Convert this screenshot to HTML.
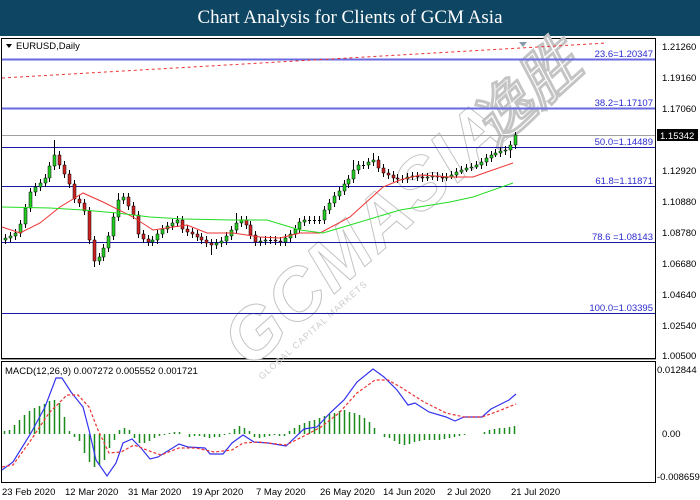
<!DOCTYPE html>
<html><head><meta charset="utf-8"><style>
html,body{margin:0;padding:0;background:#fff;width:700px;height:500px;overflow:hidden}
.hd{position:absolute;left:0;top:0;width:700px;height:36px;background:#0d4562;color:#fff;font:19px "Liberation Serif",serif;text-align:center;line-height:36px}
svg{position:absolute;left:0;top:0}
text{font-family:"Liberation Sans",sans-serif}
</style></head><body>
<div class="hd">Chart Analysis for Clients of GCM Asia</div>
<svg width="700" height="500" viewBox="0 0 700 500">
<g font-size="10" fill="#000">
<rect x="1.5" y="38.5" width="654" height="320" fill="none" stroke="#000"/>
<rect x="1.5" y="361.5" width="654" height="121" fill="none" stroke="#000"/>
<line x1="1" y1="359.5" x2="656" y2="359.5" stroke="#999"/>
<g transform="translate(250,370) rotate(-42)" fill="#fff" stroke="#c4c4c4" stroke-width="1">
<text x="0" y="0" font-size="72" font-weight="bold" font-style="italic" letter-spacing="2">GCMASIA</text>
<text x="330" y="0" font-size="60" font-weight="bold" font-style="italic">逸胜</text>
</g>
<text transform="translate(262,380) rotate(-42)" x="0" y="0" font-size="9" fill="#ccc" letter-spacing="1">GLOBAL CAPITAL MARKETS</text>
<line x1="2" y1="59.5" x2="655" y2="59.5" stroke="#6a6ae0" stroke-width="2"/>
<line x1="2" y1="108.5" x2="655" y2="108.5" stroke="#6a6ae0" stroke-width="2"/>
<line x1="2" y1="135.5" x2="655" y2="135.5" stroke="#a0a0a0"/>
<line x1="2" y1="147.5" x2="655" y2="147.5" stroke="#1a1aa8"/>
<line x1="2" y1="186.5" x2="655" y2="186.5" stroke="#1a1aa8"/>
<line x1="2" y1="242.5" x2="655" y2="242.5" stroke="#1a1aa8"/>
<line x1="2" y1="313.5" x2="655" y2="313.5" stroke="#1a1aa8"/>
<line x1="2" y1="78" x2="607" y2="43" stroke="#e33" stroke-dasharray="3,3"/>
<polygon points="519,42 527,42 523,47" fill="#8899aa"/>
<g fill="#2a2ad0" text-anchor="end" font-size="9.5">
<text x="653" y="57">23.6=1.20347</text>
<text x="653" y="106">38.2=1.17107</text>
<text x="653" y="145">50.0=1.14489</text>
<text x="653" y="184">61.8=1.11871</text>
<text x="653" y="240">78.6 =1.08143</text>
<text x="653" y="311">100.0=1.03395</text>
</g>
<polygon points="6,44 12,44 9,48" fill="#000"/>
<text x="16" y="49" font-size="9.5">EURUSD,Daily</text>
<text x="5" y="374" font-size="9.5">MACD(12,26,9) 0.007272 0.005552 0.001721</text>
<path fill="none" stroke="#000" stroke-width="1" d="M5.5 234V244M10.5 232V242M15.5 229V240M20.5 220V237M25.5 204V228M30.5 188V212M35.5 183V196M40.5 179V191M45.5 174V187M49.5 162V182M54.5 140V170M59.5 151V169M64.5 161V178M69.5 170V188M74.5 180V203M79.5 195V207M84.5 199V215M89.5 207V244M94.5 236V267M99.5 253V265M103.5 244V261M108.5 232V252M113.5 213V240M118.5 193V221M123.5 193V204M128.5 193V210M133.5 202V219M138.5 211V238M143.5 230V243M148.5 235V246M152.5 236V246M157.5 230V244M162.5 225V238M167.5 222V233M172.5 219V230M177.5 216V227M182.5 216V233M187.5 225V236M192.5 228V238M197.5 230V241M201.5 233V244M206.5 236V247M211.5 239V255M216.5 239V249M221.5 237V247M226.5 232V245M231.5 226V240M236.5 213V234M241.5 216V227M246.5 216V229M250.5 221V239M255.5 231V246M260.5 237V246M265.5 236V245M270.5 236V244M275.5 236V245M280.5 237V246M285.5 234V246M290.5 230V242M295.5 225V238M299.5 218V233M304.5 216V226M309.5 216V224M314.5 216V224M319.5 216V224M324.5 206V224M329.5 199V214M334.5 192V207M339.5 187V200M344.5 180V195M348.5 175V188M353.5 160V183M358.5 161V174M363.5 161V169M368.5 158V169M373.5 153V166M378.5 156V172M383.5 164V177M388.5 169V179M393.5 171V182M397.5 174V183M402.5 175V183M407.5 173V183M412.5 172V180M417.5 172V181M422.5 173V182M427.5 173V181M432.5 172V180M437.5 172V181M442.5 173V182M446.5 173V181M451.5 171V179M456.5 168V178M461.5 166V174M466.5 164V172M471.5 163V171M476.5 161V169M481.5 158V169M486.5 154V166M491.5 151V162M495.5 149V157M500.5 147V157M505.5 146V155M510.5 141V158M515.5 132V149M269 240.5h3M308 220.5h3M313 220.5h3M318 220.5h3M362 165.5h3M401 179.5h3"/>
<path fill="#22cc22" stroke="#000" stroke-width="0.5" d="M4 238h3v2h-3zM9 236h3v2h-3zM14 233h3v3h-3zM19 224h3v9h-3zM24 208h3v16h-3zM29 192h3v16h-3zM34 187h3v5h-3zM39 183h3v4h-3zM44 178h3v5h-3zM48 166h3v12h-3zM53 155h3v11h-3zM98 257h3v4h-3zM102 248h3v9h-3zM107 236h3v12h-3zM112 217h3v19h-3zM117 200h3v17h-3zM122 197h3v3h-3zM151 240h3v2h-3zM156 234h3v6h-3zM161 229h3v5h-3zM166 226h3v3h-3zM171 223h3v3h-3zM176 220h3v3h-3zM215 243h3v2h-3zM220 241h3v2h-3zM225 236h3v5h-3zM230 230h3v6h-3zM235 223h3v7h-3zM240 220h3v3h-3zM259 241h3v1h-3zM264 240h3v1h-3zM284 238h3v4h-3zM289 234h3v4h-3zM294 229h3v5h-3zM298 222h3v7h-3zM303 220h3v2h-3zM323 210h3v10h-3zM328 203h3v7h-3zM333 196h3v7h-3zM338 191h3v5h-3zM343 184h3v7h-3zM347 179h3v5h-3zM352 170h3v9h-3zM357 165h3v5h-3zM367 162h3v3h-3zM372 160h3v2h-3zM406 177h3v2h-3zM411 176h3v1h-3zM426 177h3v1h-3zM431 176h3v1h-3zM445 177h3v1h-3zM450 175h3v2h-3zM455 172h3v3h-3zM460 170h3v2h-3zM465 168h3v2h-3zM470 167h3v1h-3zM475 165h3v2h-3zM480 162h3v3h-3zM485 158h3v4h-3zM490 155h3v3h-3zM494 153h3v2h-3zM499 151h3v2h-3zM504 150h3v1h-3zM509 145h3v5h-3zM514 135h3v10h-3z"/>
<path fill="#cc2222" stroke="#000" stroke-width="0.5" d="M58 155h3v10h-3zM63 165h3v9h-3zM68 174h3v10h-3zM73 184h3v15h-3zM78 199h3v4h-3zM83 203h3v8h-3zM88 211h3v29h-3zM93 240h3v21h-3zM127 197h3v9h-3zM132 206h3v9h-3zM137 215h3v19h-3zM142 234h3v5h-3zM147 239h3v3h-3zM181 220h3v9h-3zM186 229h3v3h-3zM191 232h3v2h-3zM196 234h3v3h-3zM200 237h3v3h-3zM205 240h3v3h-3zM210 243h3v2h-3zM245 220h3v5h-3zM249 225h3v10h-3zM254 235h3v7h-3zM274 240h3v1h-3zM279 241h3v1h-3zM377 160h3v8h-3zM382 168h3v5h-3zM387 173h3v2h-3zM392 175h3v3h-3zM396 178h3v1h-3zM416 176h3v1h-3zM421 177h3v1h-3zM436 176h3v1h-3zM441 177h3v1h-3z"/>
<polyline fill="none" stroke="#e33" stroke-width="1" points="2,227 20,233 40,223 60,207 83,193 103,202 133,217 153,230 173,227 187,225 207,233 233,233 260,237 280,238 300,233 320,233 350,217 383,187 400,180 420,175 450,177 473,177 487,172 513,163"/>
<polyline fill="none" stroke="#2d2" stroke-width="1" points="2,207 50,208 83,210 117,213 150,217 183,219 233,220 267,220 290,227 300,230 323,233 350,225 400,210 450,202 473,197 513,183"/>
<path fill="none" stroke="#1a8a1a" stroke-width="1.5" d="M4.5 434V431M9.5 434V430M14.5 434V425M19.5 434V420M24.5 434V415M29.5 434V411M34.5 434V408M39.5 434V406M44.5 434V404M49.5 434V401M54.5 434V400M59.5 434V403M64.5 434V417M69.5 434V431M74.5 434V437M79.5 434V441M84.5 434V453M89.5 434V462M94.5 434V467M99.5 434V465M104.5 434V460M109.5 434V448M114.5 434V440M119.5 434V430M124.5 434V428M129.5 434V430M134.5 434V438M139.5 434V443M144.5 434V443M149.5 434V441M154.5 434V438M159.5 434V436M164.5 434V435M169.5 434V433M174.5 434V432M179.5 434V432M184.5 434V434M189.5 434V437M194.5 434V436M199.5 434V436M204.5 434V437M209.5 434V438M214.5 434V437M219.5 434V437M224.5 434V435M229.5 434V433M234.5 434V429M239.5 434V426M244.5 434V428M249.5 434V431M254.5 434V437M259.5 434V438M264.5 434V437M269.5 434V436M274.5 434V435M279.5 434V436M284.5 434V436M289.5 434V431M294.5 434V428M299.5 434V425M304.5 434V423M309.5 434V421M314.5 434V420M319.5 434V418M324.5 434V416M329.5 434V414M334.5 434V413M339.5 434V411M344.5 434V410M349.5 434V412M354.5 434V413M359.5 434V415M364.5 434V418M369.5 434V422M374.5 434V428M379.5 434V434M384.5 434V437M389.5 434V438M394.5 434V441M399.5 434V444M404.5 434V445M409.5 434V444M414.5 434V442M419.5 434V441M424.5 434V440M429.5 434V440M434.5 434V440M439.5 434V440M444.5 434V439M449.5 434V438M454.5 434V437M459.5 434V436M464.5 434V435M484.5 434V432M489.5 434V430M494.5 434V429M499.5 434V428M504.5 434V428M509.5 434V427M514.5 434V426"/>
<polyline fill="none" stroke="#33e" stroke-width="1.2" points="2,470 13,462 31,433 45,407 56,378 62,378 71,392 83,407 89,430 96,460 107,476 116,463 123,443 132,439 141,448 150,459 158,457 179,444 188,447 205,448 210,454 223,454 232,443 243,435 254,442 268,443 286,446 304,429 317,427 330,413 344,400 357,382 373,369 384,377 397,390 408,405 415,403 429,412 446,417 455,421 464,417 482,417 491,409 509,400 516,394"/>
<polyline fill="none" stroke="#e33" stroke-width="1.2" stroke-dasharray="3,2" points="2,467 13,465 31,440 49,413 67,395 78,395 89,407 98,430 109,453 121,452 134,445 152,452 161,455 179,448 196,448 214,452 232,450 243,443 259,442 286,445 304,436 321,427 339,413 357,393 375,380 388,380 402,388 424,402 446,413 464,417 482,417 496,412 516,404"/>
<g font-size="9.5">
<text x="662" y="50">1.21260</text><text x="662" y="81">1.19160</text><text x="662" y="112">1.17060</text>
<text x="662" y="174">1.12920</text><text x="662" y="205">1.10880</text><text x="662" y="236">1.08780</text>
<text x="662" y="267">1.06680</text><text x="662" y="298">1.04640</text><text x="662" y="329">1.02540</text><text x="662" y="359">1.00500</text>
<rect x="657" y="129" width="41" height="12" fill="#000"/><text x="660" y="139" fill="#fff">1.15342</text>
<text x="657" y="373">0.012844</text><text x="662" y="437">0.00</text><text x="657" y="480">-0.008659</text>
</g>
<g font-size="9.5">
<text x="2" y="495">23 Feb 2020</text><text x="65" y="495">12 Mar 2020</text><text x="128" y="495">31 Mar 2020</text>
<text x="192" y="495">19 Apr 2020</text><text x="256" y="495">7 May 2020</text><text x="320" y="495">26 May 2020</text>
<text x="383" y="495">14 Jun 2020</text><text x="447" y="495">2 Jul 2020</text><text x="511" y="495">21 Jul 2020</text>
</g>
</g>
</svg>
</body></html>
